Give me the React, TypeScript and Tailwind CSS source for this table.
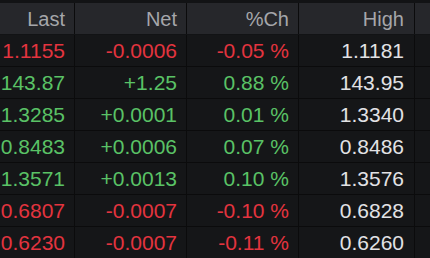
const rows = [
  { last: "1.1155", net: "-0.0006", pct: "-0.05 %", high: "1.1181", up: false },
  { last: "143.87", net: "+1.25", pct: "0.88 %", high: "143.95", up: true },
  { last: "1.3285", net: "+0.0001", pct: "0.01 %", high: "1.3340", up: true },
  { last: "0.8483", net: "+0.0006", pct: "0.07 %", high: "0.8486", up: true },
  { last: "1.3571", net: "+0.0013", pct: "0.10 %", high: "1.3576", up: true },
  { last: "0.6807", net: "-0.0007", pct: "-0.10 %", high: "0.6828", up: false },
  { last: "0.6230", net: "-0.0007", pct: "-0.11 %", high: "0.6260", up: false },
];

const cell = "flex items-center justify-end pr-[9px] border-r border-[#0b0b0c] shrink-0 whitespace-nowrap";

export default function App() {
  return (
    <div
      className="w-[430px] h-[258px] overflow-hidden bg-[#151618] text-[21px]"
      style={{ fontFamily: '"Liberation Sans", Arial, sans-serif' }}
    >
      <div className="flex h-[35px] border-t-[3px] border-b border-[#121315] bg-[#26272b] text-[#a5a6aa] text-[20px]">
        <div className={`${cell} w-[75px]`}>Last</div>
        <div className={`${cell} w-[112px]`}>Net</div>
        <div className={`${cell} w-[112px]`}>%Ch</div>
        <div className={`${cell} w-[116px] pr-[10px]`}>High</div>
        <div className="flex-1" />
      </div>
      {rows.map((r, i) => {
        const color = r.up ? "text-[#5ac266]" : "text-[#e3343f]";
        return (
          <div key={i} className="flex h-[32px] border-b border-[#0b0b0c]">
            <div className={`${cell} w-[75px] ${color}`}>{r.last}</div>
            <div className={`${cell} w-[112px] ${color}`}>{r.net}</div>
            <div className={`${cell} w-[112px] ${color}`}>{r.pct}</div>
            <div className={`${cell} w-[116px] pr-[10px] text-[#e2e2e5]`}>{r.high}</div>
            <div className="flex-1" />
          </div>
        );
      })}
    </div>
  );
}
